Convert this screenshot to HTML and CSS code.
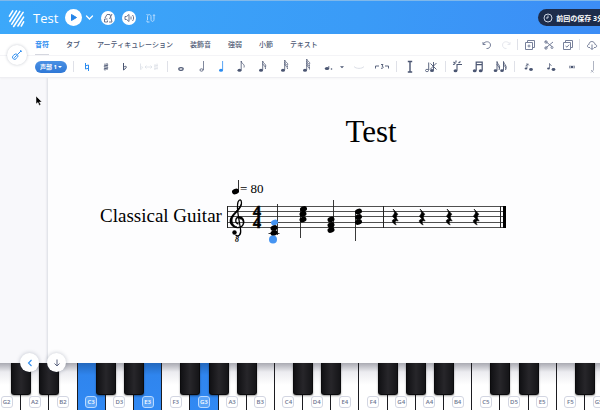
FILE: index.html
```html
<!DOCTYPE html>
<html lang="ja">
<head>
<meta charset="utf-8">
<meta name="viewport" content="width=device-width, initial-scale=1">
<title>Test</title>
<link rel="stylesheet" href="styles.css">
</head>
<body>
<svg class="defs" aria-hidden="true">
  <defs>
    <g id="head"><ellipse rx="3.600" ry="2.600" transform="rotate(-22)"/></g>
    <g id="rest"><path d="M-2 -8 L2.8 -2.8 C.8 -.8 .8 1.2 3.2 4 C.2 3 -.8 5.2 1.2 8 C-4.5 5.2 -3 1.8 .2 2.4 L-2.6 -1 C0 -3.2 0 -5.2 -2 -8Z" stroke="#000" stroke-width=".6"/></g>
  </defs>
</svg>

<header class="topbar">
  <svg class="logo" viewBox="0 0 18 20" aria-hidden="true"><g stroke="#fff" stroke-width="1.7" stroke-linecap="round"><path d="M1.500 8 5 2.500M2 13.500 9 2.500M4 16.500 12.500 3M6 19 16 4M10.500 18.500 16.500 9M14 18.500 16.500 14"/></g></svg>
  <h1 class="doc-name">Test</h1>
  <button class="round play" aria-label="再生"><svg viewBox="0 0 17 17"><path d="M6.500 5.500v6l5-3z" fill="#2484e8" stroke="#2484e8" stroke-linejoin="round"/></svg></button>
  <button class="plain more" aria-label="再生オプション"><svg viewBox="0 0 9 17"><path d="m1.500 7 3 3 3-3" fill="none" stroke="#fff" stroke-width="1.300" stroke-linecap="round"/></svg></button>
  <button class="round small" aria-label="メトロノーム"><svg viewBox="0 0 14 14"><path d="M6 3.500h3l2 7.500H8M6 3.500 4 7M8.500 8 11 3M3.500 8v3h3V9.500M3.500 8h3" fill="none" stroke="#6d7690"/></svg></button>
  <button class="round small" aria-label="音量"><svg viewBox="0 0 14 14"><path d="M3 5.500h1.500L7 3.500v7l-2.500-2H3zM9 5.500v3M10.500 4c1.500 2 1.500 4 0 6" fill="none" stroke="#6d7690"/></svg></button>
  <button class="plain loop" aria-label="ループ"><svg viewBox="0 0 14 14"><path d="M4.500 9V5.500c0-2.500 3.500-2.500 3.500 0v3c0 2.500 3 2.500 3 0V5M3.500 4l1-1M10 5l1-1.500L12 5M4 9.500v1.500h2.500" fill="none" stroke="#b9ddff"/></svg></button>
  <div class="saved"><svg viewBox="0 0 10 10" aria-hidden="true"><circle cx="5" cy="5" r="4" fill="none" stroke="#dce4f2" stroke-width=".9"/><path d="M5 2.500V5H3" fill="none" stroke="#dce4f2" stroke-width=".9"/></svg><span>前回の保存 3分前</span></div>
</header>

<section class="toolbars">
  <button class="instrument" aria-label="ギター"><svg viewBox="0 0 20 20"><g fill="none" stroke="#2d8df0" stroke-linecap="round"><path d="M10.500 9.500 14 6M13.500 5.500l1 1"/><path d="M7.500 9.500c1-1 2-.5 2.500 0s1.500 1.500.5 2.500c-1 .5-1 2-2.300 2.300-1.500.3-3-1-2.700-2.500.3-1.200 1.300-1.300 2-2.300z"/><path d="m7.500 12.500 2-2"/></g></svg></button>
  <div class="tabs-row">
    <nav class="tabs">
      <a class="active" href="#note">音符</a><a href="#tab">タブ</a><a href="#art">アーティキュレーション</a><a href="#orn">装飾音</a><a href="#dyn">強弱</a><a href="#bar">小節</a><a href="#text">テキスト</a>
    </nav>
    <div class="edit">
      <button aria-label="元に戻す"><svg viewBox="0 0 12 12"><path d="M2 3v2.500h2.500M2.200 5.200C4 1.500 9.500 2.200 9.500 6c0 2.500-2 3.800-4 3.500"/></svg></button>
      <button class="off" aria-label="やり直す"><svg viewBox="0 0 12 12"><path d="M10 3v2.500H7.500M9.800 5.200C8 1.500 2.500 2.200 2.500 6c0 2.500 2 3.800 4 3.500"/></svg></button>
      <i class="sep"></i>
      <button aria-label="コピー"><svg viewBox="0 0 12 12"><path d="M1.500 3.500h7v7h-7zM3.500 3V1.500h7v7H9M5 5.500v3M3.500 7h3"/></svg></button>
      <button aria-label="切り取り"><svg viewBox="0 0 12 12"><path d="m2 2 7 5.500M2 9.500 10 3"/><circle cx="3" cy="3" r="1.200"/><circle cx="3" cy="9" r="1.200"/><circle cx="9" cy="8.500" r="1"/></svg></button>
      <button aria-label="貼り付け"><svg viewBox="0 0 12 12"><path d="M1.500 3.500h7v7h-7zM3.500 3V1.500h7v7H9M3.500 7 5 8.200l2-2.500"/></svg></button>
      <i class="sep"></i>
      <button aria-label="書き出し"><svg viewBox="0 0 12 12"><path d="M4 8.500H3C.8 8.500 1 5.500 3 5.500c0-4 5.500-4 6 0 2.200 0 2.200 3 0 3H8M6 5.500v5M4.500 9 6 10.500 7.500 9"/></svg></button>
    </div>
  </div>
  <div class="tools">
    <label class="voice"><select aria-label="声部"><option>声部 1</option><option>声部 2</option></select><svg viewBox="0 0 6 4" aria-hidden="true"><path d="M1 1h4L3 3z" fill="#fff"/></svg></label>
    <i class="sep"></i>
    <button class="w19 on" aria-label="ナチュラル"><svg viewBox="-8 -8 16 16"><path d="M-1.500-4v6l3-.8M1.500 4v-6l-3 .8" fill="none" stroke="currentColor"/></svg></button>
    <button class="w19" aria-label="シャープ"><svg viewBox="-8 -8 16 16"><path d="M-1-3.500v7M1-4v7M-2.200-.8l4.400-1.200M-2.200 2l4.400-1.200" fill="none" stroke="currentColor" stroke-width=".9"/></svg></button>
    <button class="w19" aria-label="フラット"><svg viewBox="-8 -8 16 16"><path d="M-1.500-4V3C2.500.5 2-2-1.500.2" fill="none" stroke="currentColor"/></svg></button>
    <button class="w30 off" aria-label="異名同音"><svg class="wide" viewBox="-11 -8 22 16"><path d="M-8.500-3.500V2.500c3-1.500 2.500-3.500 0-2.200M-4 0h7M-2.500-1.500L-4 0l1.500 1.500M1.500-1.500 3 0 1.500 1.500M6-3v6M8-3.500v6M5-.8l4-1M5 2l4-1" fill="none" stroke="currentColor" stroke-width=".8"/></svg></button>
    <i class="sep"></i>
    <button class="w20" aria-label="全音符"><svg viewBox="-8 -8 16 16"><ellipse cy="2" rx="2.200" ry="1.300" fill="none" stroke="currentColor" stroke-width="1.200"/></svg></button>
    <button class="w20" aria-label="二分音符"><svg viewBox="-8 -8 16 16"><ellipse cx=".5" cy="3" rx="1.600" ry="1.200" fill="none" stroke="currentColor" stroke-width=".8"/><path d="M2.500 3v-9" stroke="currentColor" stroke-width=".7"/></svg></button>
    <button class="w20 on" aria-label="四分音符"><svg viewBox="-8 -8 16 16"><ellipse cx="0" cy="3.200" rx="2" ry="1.500" fill="currentColor"/><path d="M1.600 3v-9" stroke="currentColor" stroke-width=".8"/></svg></button>
    <button class="w20" aria-label="八分音符"><svg viewBox="-8 -8 16 16"><ellipse cx="-1.500" cy="3.200" rx="2" ry="1.500" fill="currentColor"/><path d="M.2 3v-9c.3 3 4 3 2.800 6.500" fill="none" stroke="currentColor" stroke-width=".8"/></svg></button>
    <button class="w22" aria-label="十六分音符"><svg viewBox="-8 -8 16 16"><ellipse cx="-1" cy="3.200" rx="2" ry="1.500" fill="currentColor"/><path d="M.7 3v-9c.3 2.500 4 3 2.800 6M.7-3.500C1-1.500 4-1 3.500 2" fill="none" stroke="currentColor" stroke-width=".8"/></svg></button>
    <button class="w22" aria-label="三十二分音符"><svg viewBox="-8 -8 16 16"><ellipse cx="-1" cy="3.200" rx="2" ry="1.500" fill="currentColor"/><path d="M.7 3v-10c.3 2 4 3 2.800 5M.7-5C1-2.500 4-2 3.500 0M.7-3C1-1 4 0 3.500 2" fill="none" stroke="currentColor" stroke-width=".8"/></svg></button>
    <button class="w22" aria-label="六十四分音符"><svg viewBox="-8 -8 16 16"><ellipse cx="-1" cy="3.200" rx="2" ry="1.500" fill="currentColor"/><path d="M.7 3V-8c.3 2 4 3 2.800 5M.7-6C1-4 4-3 3.500-1M.7-4C1-2 4-1 3.500 1M.7-2C1 0 4 0 3.500 2.500" fill="none" stroke="currentColor" stroke-width=".8"/></svg></button>
    <button class="w20" aria-label="付点"><svg viewBox="-8 -8 16 16"><ellipse cx="0" cy="1.500" rx="2.200" ry="1.500" fill="currentColor"/><path d="M1.800 1v-2" stroke="currentColor" stroke-width=".8"/><circle cx="4.500" cy="2" r=".8" fill="currentColor"/></svg></button>
    <button class="w10" aria-label="その他の付点"><svg class="tiny" viewBox="-4 -8 8 16"><path d="M-2-.8h4L0 1.200z" fill="currentColor"/></svg></button>
    <button class="w24 off" aria-label="タイ"><svg viewBox="-8 -8 16 16"><path d="M-5-.5C-3 2 3 2 5-.5" fill="none" stroke="currentColor"/></svg></button>
    <button class="w22" aria-label="三連符"><svg class="wide" viewBox="-11 -8 22 16"><path d="M-6.500 1.500v-2.500h3.500M3-1h3.500v2.500M-1-2.500h2L0-.8c2 0 1.500 2.800-1 2" fill="none" stroke="currentColor" stroke-width=".9"/></svg></button>
    <i class="sep"></i>
    <button class="w20" aria-label="選択"><svg viewBox="-8 -8 16 16"><path d="M-2.200-5.500h4.400M-2.200 5h4.400M0-5.500V5" fill="none" stroke="currentColor" stroke-width="1.400"/></svg></button>
    <button class="w22" aria-label="音符を削除"><svg viewBox="-8 -8 16 16"><ellipse cx="-4" cy="3.500" rx="1.500" ry="1.200" fill="none" stroke="currentColor" stroke-width=".8"/><ellipse cx="1" cy="3.500" rx="2" ry="1.500" fill="currentColor"/><path d="M-2.300 3v-7.500M2.500 3v-8M-.5-3.500l6 6M5.500-4-1 2.500" stroke="currentColor" stroke-width=".9"/></svg></button>
    <i class="sep"></i>
    <button class="w18" aria-label="連桁を分割"><svg viewBox="-8 -8 16 16"><ellipse cx="-2.500" cy="3.700" rx="1.900" ry="1.500" fill="currentColor"/><path d="M-1 3.500v-6h5M-4.500-5l2 1.500M-2-6.500v2M2.500-5.500l-2 1.500M-5-2.500l2-.5" fill="none" stroke="currentColor" stroke-width="1.100"/></svg></button>
    <button class="w22" aria-label="連桁"><svg viewBox="-8 -8 16 16"><ellipse cx="-3.300" cy="3.700" rx="1.900" ry="1.500" fill="currentColor"/><ellipse cx="2.700" cy="3.700" rx="1.900" ry="1.500" fill="currentColor"/><path d="M-1.800 3.500V-5.500M4.200 3.500V-5.500M-2.200-4.800h6.800M-2.200-2.300h6.800" stroke="currentColor" stroke-width="1.200"/></svg></button>
    <button class="w22" aria-label="連桁なし"><svg viewBox="-8 -8 16 16"><ellipse cx="-4.500" cy="3.700" rx="1.800" ry="1.400" fill="currentColor"/><ellipse cx="2" cy="3.700" rx="1.800" ry="1.400" fill="currentColor"/><path d="M-3 3.500v-9c0 2.500 3.500 3.500 2.500 7M-3-3c0 2 3.500 3 2 6M3.500 3.500v-9c0 2.500 3.500 3.500 2.500 7M3.500-3c0 2 3.500 3 2 6" fill="none" stroke="currentColor" stroke-width=".9"/></svg></button>
    <i class="sep"></i>
    <button class="w22" aria-label="前打音"><svg viewBox="-8 -8 16 16"><ellipse cx="-3" cy="1.500" rx="1.400" ry="1.100" fill="currentColor"/><ellipse cx="2" cy="2.500" rx="1.900" ry="1.400" fill="currentColor"/><path d="M-2 1v-4.500l2 2M-3.500-1l3-2" fill="none" stroke="currentColor" stroke-width=".7"/></svg></button>
    <button class="w22" aria-label="長前打音"><svg viewBox="-8 -8 16 16"><ellipse cx="-2.500" cy="1.500" rx="1.400" ry="1.100" fill="currentColor"/><ellipse cx="2.500" cy="2.500" rx="1.900" ry="1.400" fill="currentColor"/><path d="M-1.500 1v-4.500l2 2.500" fill="none" stroke="currentColor" stroke-width=".7"/></svg></button>
    <button class="w22" aria-label="ゴースト音符"><svg viewBox="-8 -8 16 16"><ellipse cx="-1" cy="0" rx="1.500" ry="1.200" fill="currentColor"/><path d="M-3-1.500q-1 1.500 0 3M1-1.500q1 1.500 0 3" fill="none" stroke="currentColor" stroke-width=".7"/></svg></button>
    <button class="w20" aria-label="符頭"><svg viewBox="-8 -8 16 16"><path d="M-.5 3v-9M-3 3l2.500 2.500M-.5 3-3 5.500" stroke="#9aa1b3" stroke-width=".8"/></svg></button>
  </div>
</section>

<main class="workspace">
  <article class="sheet">
    <h2 class="title">Test</h2>
    <div class="system">
      <span class="part">Classical Guitar</span>
      <svg class="score" viewBox="225 178 284 68" role="img" aria-label="楽譜">
        <g stroke="#222" stroke-width=".8"><path d="M227 206.500h279M227 211.500h279M227 216.500h279M227 222.500h279M227 227.500h279"/><path d="M227.500 206v22M383.500 206v22M500.500 206v22" stroke-width="1"/></g>
        <path d="M503 206h3v22h-3z"/>
        <use href="#head" x="235.500" y="191.500"/><path d="M238.500 191.500V180" stroke="#000" stroke-width=".8"/>
        <text x="240" y="192.500" font-size="13">= 80</text>
        <path d="M238.500 224C234.500 223 235 217 239.500 217 C245 217.500 245 227 238.500 227.500 C232.500 228 229 223 230.800 218.500 C233 213 241.500 209 241.500 203 C241.500 199.500 239.500 198.500 238 202 C236.800 206 237.500 211 238.500 217L240.500 229C241.500 235 238.500 237 235.500 235" fill="none" stroke="#000" stroke-width="1.300"/>
        <path d="M239.500 217.500C242.500 217 245.500 220.500 243.500 224.500C244 221 242 219 239.500 219ZM230.800 218.500C233 213 239 210 241.500 203.500C241.500 210 233 214 232.300 219.500C231.800 223 234 226 237 227C232.500 227 229.500 223 230.800 218.500Z" stroke="#000" stroke-width=".5"/>
        <circle cx="234.500" cy="232.500" r="2.200"/>
        <text x="235" y="241.500" font-size="8" font-weight="bold" font-style="italic">8</text>
        <text class="meter" x="253" y="217">4</text>
        <text class="meter" x="253" y="228">4</text>
        <g stroke="#222" stroke-width=".9"><path d="M277.500 204v31M300.500 210v28M333.500 200v30M355.500 212v29M268.500 233.500h11"/></g>
        <use href="#head" x="274.500" y="222.500" fill="#4594f2"/><use href="#head" x="274" y="228"/><use href="#head" x="274" y="233"/>
        <circle cx="273" cy="239.500" r="4" fill="#4594f2"/>
        <use href="#head" x="303.500" y="209"/><use href="#head" x="303" y="214"/><use href="#head" x="303" y="219.500"/>
        <use href="#head" x="331" y="219.500"/><use href="#head" x="331" y="225"/><use href="#head" x="331" y="230"/>
        <use href="#head" x="358.500" y="211.500"/><use href="#head" x="358.500" y="217"/><use href="#head" x="358.500" y="222"/>
        <use href="#rest" x="395" y="217"/><use href="#rest" x="422" y="217"/><use href="#rest" x="449" y="217"/><use href="#rest" x="476" y="217"/>
      </svg>
    </div>
  </article>
  <svg class="pointer" viewBox="0 0 8 12" aria-hidden="true"><path d="M1 1v8l2-1.500L4.200 10.500l1.600-.7L4.500 7H7z" fill="#000" stroke="#fff" stroke-width=".5"/></svg>
  <div class="float">
    <button aria-label="前へ"><svg viewBox="0 0 20 20"><path d="m11.500 7-3 3 3 3" fill="none" stroke="#2d8df0" stroke-width="1.100"/></svg></button>
    <button aria-label="隠す"><svg viewBox="0 0 20 20"><path d="M10 6.500v6.500M7.500 10.500 10 13l2.500-2.500" fill="none" stroke="#5c6580"/></svg></button>
  </div>
</main>

<div class="piano">
  <button class="key"><b>G2</b></button>
  <button class="key sharp"><b>A2</b></button>
  <button class="key sharp"><b>B2</b></button>
  <button class="key down"><b>C3</b></button>
  <button class="key sharp"><b>D3</b></button>
  <button class="key sharp down"><b>E3</b></button>
  <button class="key"><b>F3</b></button>
  <button class="key sharp down"><b>G3</b></button>
  <button class="key sharp"><b>A3</b></button>
  <button class="key sharp"><b>B3</b></button>
  <button class="key"><b>C4</b></button>
  <button class="key sharp"><b>D4</b></button>
  <button class="key sharp"><b>E4</b></button>
  <button class="key"><b>F4</b></button>
  <button class="key sharp"><b>G4</b></button>
  <button class="key sharp"><b>A4</b></button>
  <button class="key sharp"><b>B4</b></button>
  <button class="key"><b>C5</b></button>
  <button class="key sharp"><b>D5</b></button>
  <button class="key sharp"><b>E5</b></button>
  <button class="key"><b>F5</b></button>
  <button class="key sharp"><b>G5</b></button>
</div>
</body>
</html>
```
FILE: styles.css
```css
* { box-sizing: border-box; }

body {
  margin: 0;
  min-height: 100vh;
  display: flex;
  flex-direction: column;
  overflow: hidden;
  background: #fdfdfe;
  color: #4b5672;
  font-family: "Open Sans", "Noto Sans CJK JP", sans-serif;
}

button {
  margin: 0;
  padding: 0;
  border: 0;
  background: none;
  color: inherit;
  font: inherit;
  flex: none;
  display: flex;
  align-items: center;
  justify-content: center;
}

svg { display: block; flex: none; }
.defs { position: absolute; width: 0; height: 0; }

/* Top bar */
.topbar {
  height: 34px;
  flex: none;
  display: flex;
  align-items: center;
  padding-left: 8px;
  border-top: 1px solid #7fb8ea;
  background: linear-gradient(100deg, #3ca8fa, #3a9bf7 60%, #3c8df6);
}
.logo { width: 17px; height: 20px; }
.doc-name {
  margin: 0 7px 0 8px;
  color: #fff;
  font: 400 13px/20px "Open Sans", sans-serif;
}
.round { border-radius: 50%; background: #fff; }
.play { width: 17px; height: 17px; }
.play svg { width: 17px; height: 17px; }
.more { width: 15px; margin-right: 4px; }
.more svg { width: 9px; height: 17px; }
.small { width: 14px; height: 14px; margin-right: 7px; }
.small svg, .loop svg { width: 14px; height: 14px; }
.saved {
  margin-left: auto;
  margin-right: -19px;
  height: 17px;
  padding: 0 8px 0 5px;
  display: flex;
  align-items: center;
  gap: 3px;
  border-radius: 9px;
  background: #1d2c4b;
  color: #fff;
  font-size: 7px;
  font-weight: 700;
  white-space: nowrap;
}
.saved svg { width: 10px; height: 10px; }

/* Toolbars */
.toolbars {
  position: relative;
  z-index: 1;
  flex: none;
  background: #fff;
  border-bottom: 1px solid #eeeef2;
  box-shadow: 0 1px 2px #00000008;
}
.tabs-row {
  height: 22px;
  display: flex;
  padding-left: 35px;
  border-bottom: 1px solid #f4f4f7;
}
.tabs { display: flex; gap: 17px; }
.tabs a {
  flex: none;
  padding-top: 1px;
  color: #4b5672;
  font-size: 7px;
  font-weight: 500;
  line-height: 19px;
  text-decoration: none;
  white-space: nowrap;
}
.tabs .active {
  color: #2d8df0;
  font-weight: 700;
  border-bottom: 1px solid #d5d7df;
}
.edit {
  display: flex;
  align-items: center;
  margin: 0 -1px 0 auto;
}
.edit button { width: 19px; }
.edit svg {
  width: 12px;
  height: 12px;
  fill: none;
  stroke: #77809a;
  stroke-width: 1;
}
.edit .off svg { stroke: #e6e8ee; }
.sep {
  flex: none;
  width: 1px;
  height: 11px;
  margin: 0 2px;
  background: #dfe1e8;
}
.tools {
  height: 21px;
  display: flex;
  align-items: center;
  padding-left: 35px;
  overflow: hidden;
}
.tools .sep { margin: 0 3px; }
.tools button svg { width: 16px; height: 16px; }
.tools button .wide { width: 22px; }
.tools button .tiny { width: 8px; }
.tools .on { color: #2d8df0; }
.tools .off { color: #dcdfe7; }
.w10 { width: 10px; }
.w18 { width: 18px; }
.w19 { width: 19px; }
.w20 { width: 20px; }
.w22 { width: 22px; }
.w24 { width: 24px; }
.w30 { width: 30px; }
.voice {
  position: relative;
  flex: none;
  width: 32px;
  height: 12px;
  margin-right: 3px;
  border-radius: 6px;
  background: linear-gradient(#4a90e4, #2f78d6);
}
.voice select {
  display: block;
  width: 100%;
  height: 100%;
  padding: 0 0 0 5px;
  border: 0;
  appearance: none;
  background: none;
  color: #fff;
  font: 700 6px/12px "Open Sans", "Noto Sans CJK JP", sans-serif;
}
.voice svg {
  position: absolute;
  right: 4px;
  top: 4px;
  width: 6px;
  height: 4px;
}
.instrument {
  position: absolute;
  z-index: 2;
  left: 7px;
  top: 11px;
  width: 20px;
  height: 20px;
  border-radius: 50%;
  background: #fff;
  box-shadow: 0 0 3px #1d2c4b44;
}
.instrument svg { width: 20px; height: 20px; }

/* Score */
.workspace {
  position: relative;
  flex: 1;
  display: flex;
  padding-left: 48px;
  background: #f8f8fb;
}
.sheet {
  flex: 1;
  min-width: 0;
  padding-top: 33px;
  background: #fdfdfe;
  box-shadow: -1px 0 2px #1d2c4b22;
  color: #000;
  font-family: "Liberation Serif", serif;
}
.title {
  margin: 0;
  padding-left: 94px;
  text-align: center;
  font-size: 31px;
  font-weight: 400;
  line-height: 42px;
}
.system {
  display: flex;
  align-items: center;
  gap: 3px;
  margin-top: 25px;
  padding-left: 52px;
}
.part {
  padding-top: 8px;
  font-size: 19px;
  line-height: 24px;
  white-space: nowrap;
}
.score {
  width: 284px;
  height: 68px;
  font-family: "Liberation Serif", serif;
}
.meter { font-size: 16px; font-weight: 700; stroke: #000; stroke-width: .6px; }
.pointer {
  position: absolute;
  left: 35px;
  top: 17px;
  width: 8px;
  height: 12px;
}
.float {
  position: absolute;
  z-index: 2;
  left: 20px;
  bottom: -9px;
  display: flex;
  gap: 8px;
}
.float button {
  width: 19px;
  height: 19px;
  border-radius: 50%;
  background: #fff;
  box-shadow: 0 0 4px #1d2c4b44;
}
.float svg { width: 20px; height: 20px; }

/* Piano */
.piano {
  flex: none;
  height: 47px;
  width: calc(100% + 20px);
  margin-left: -8px;
  display: flex;
}
.key {
  position: relative;
  flex: 1;
  align-items: flex-end;
  padding-bottom: 2px;
  border-left: 1px solid #1b1b20;
  background: linear-gradient(#a9aab2, #ececf0 9px, #fff 22px);
}
.key b {
  width: 12px;
  height: 12px;
  border: 1px solid #d3d6e2;
  border-radius: 3px;
  background: #fff;
  color: #6c7590;
  font-size: 6px;
  font-weight: 600;
  line-height: 10px;
  text-align: center;
}
.key.down { background: linear-gradient(#2468bd, #2f85ee 12px, #3189f3); }
.key.down b {
  border-color: #b9d9ff;
  background: #5aa3f7;
  color: #fff;
}
.key.sharp::before {
  content: "";
  position: absolute;
  z-index: 1;
  left: -10px;
  top: 0;
  width: 18px;
  height: 31px;
  border: 1px solid #0b0b0d;
  border-top: 0;
  border-radius: 0 0 3px 3px;
  background: linear-gradient(90deg, #111114, #27262a 50%, #151518);
  box-shadow: 0 1px 2px #00000066;
}
```
